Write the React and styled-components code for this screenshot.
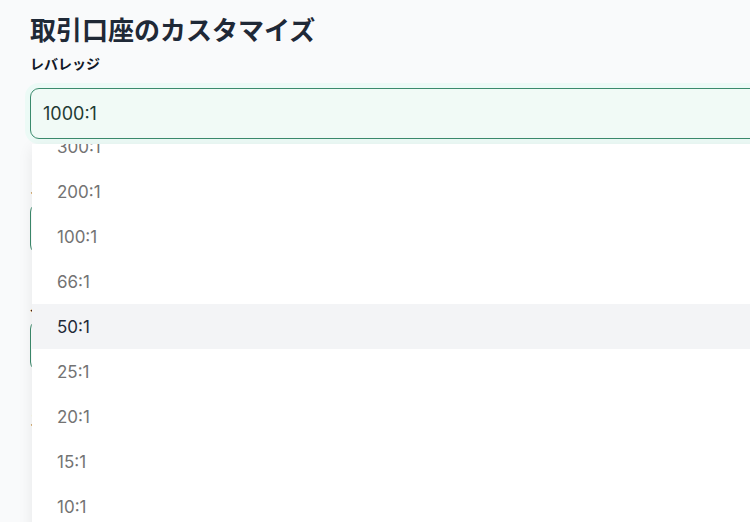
import React, { useLayoutEffect, useRef } from "react";
import styled, { createGlobalStyle } from "styled-components";

const Global = createGlobalStyle`
  html, body { margin: 0; padding: 0; overflow: hidden; background: #f9fafb; }
  body { font-family: "Inter", "Noto Sans CJK JP", sans-serif; }
  * { box-sizing: border-box; }
`;

const Page = styled.div`
  width: 1000px;
  padding: 12px 30px 0 30px;
  background: #f9fafb;
  min-height: 522px;
`;

const Title = styled.h1`
  margin: 0;
  font-family: "Noto Sans CJK JP", sans-serif;
  font-size: 26px;
  line-height: 34px;
  font-weight: 700;
  color: #1f2937;
`;

const Field = styled.div`
  display: flex;
  flex-direction: column;
  gap: ${(p) => p.$gap ?? 14}px;
  margin-top: ${(p) => p.$mt || 0}px;
  position: relative;
`;

const Label = styled.label`
  font-family: "Noto Sans CJK JP", sans-serif;
  font-size: 14px;
  line-height: 22px;
  font-weight: 700;
  color: #111827;
`;

const Anchor = styled.div`
  position: relative;
`;

const SelectBox = styled.div`
  height: 51px;
  border: 1px solid #3b8a6c;
  border-radius: 9px;
  background: ${(p) => (p.$focused ? "#f1faf6" : "#ffffff")};
  box-shadow: ${(p) => (p.$focused ? "0 0 0 5px #ecfaf6" : "none")};
  display: flex;
  align-items: center;
  padding: 0 12px;
  font-size: 18px;
  color: #1f3b34;
`;

const Menu = styled.div`
  position: absolute;
  left: 2px;
  right: 0;
  top: calc(100% + 5px);
  height: 400px;
  background: #ffffff;
  box-shadow: 0 4px 14px rgba(0, 0, 0, 0.08);
  overflow: hidden;
  z-index: 10;
`;

const Option = styled.div`
  height: 45px;
  display: flex;
  align-items: center;
  padding-left: 25px;
  font-size: 17px;
  color: ${(p) => (p.$active ? "#1f2937" : "#737373")};
  background: ${(p) => (p.$active ? "#f3f4f6" : "#ffffff")};
`;

const Note = styled.div`
  height: 51px;
`;

const options = ["1000:1", "500:1", "400:1", "300:1", "200:1", "100:1", "66:1", "50:1", "25:1", "20:1", "15:1", "10:1", "5:1", "2:1"];

export default function App() {
  const menuRef = useRef(null);
  useLayoutEffect(() => {
    if (menuRef.current) menuRef.current.scrollTop = 3 * 45 + 20;
  }, []);
  return (
    <>
      <Global />
      <Page>
        <Title>取引口座のカスタマイズ</Title>
        <Field $mt={6}>
          <Label>レバレッジ</Label>
          <Anchor>
            <SelectBox $focused>1000:1</SelectBox>
            <Menu ref={menuRef}>
              {options.map((o) => (
                <Option key={o} $active={o === "50:1"}>
                  {o}
                </Option>
              ))}
            </Menu>
          </Anchor>
        </Field>
        <Field $mt={37} $gap={5}>
          <Label>スプレッド</Label>
          <SelectBox>スタンダード</SelectBox>
        </Field>
        <Field $mt={39} $gap={5}>
          <Label>入金通貨</Label>
          <SelectBox>USD</SelectBox>
        </Field>
        <Field $mt={37} $gap={5}>
          <Label>ストップアウト</Label>
          <Note />
        </Field>
      </Page>
    </>
  );
}
